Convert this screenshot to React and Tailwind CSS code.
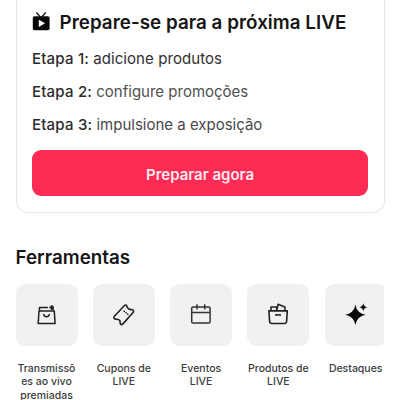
import React from 'react';

const steps = [
  { label: 'Etapa 1:', text: 'adicione produtos', color: 'text-[#303030]', tracking: 'tracking-[0.07px]' },
  { label: 'Etapa 2:', text: 'configure promoções', color: 'text-[#505050]', tracking: 'tracking-[0px]' },
  { label: 'Etapa 3:', text: 'impulsione a exposição', color: 'text-[#484848]', tracking: 'tracking-[0px]' },
];

const LiveIcon = () => (
  <svg className="w-[18px] h-[18px] overflow-visible" viewBox="0 0 18 18" fill="none">
    <path d="M4.4 -.4 8.4 4M13.8 -.4 9.8 4" stroke="#222" strokeWidth="1.5" />
    <rect x="0.8" y="3.2" width="16.8" height="14" rx="1.8" fill="#080808" />
    <path d="M6.8 6.7v7.2l6.2-3.6z" fill="#fff" />
  </svg>
);

const BagIcon = () => (
  <svg className="w-6 h-6" viewBox="0 0 24 24" fill="none" stroke="#222" strokeWidth="1.5" strokeLinejoin="round">
    <path d="M4 7.9h15.3l.8 12.6H3.2z" />
    <path d="M4.5 7.9V4.4h8.4M18.2 7.6V5.3" />
    <path d="M8.6 11c.4 3.6 5.4 3.6 5.8 0" />
    <path d="M16.8 2.2v4.6M14.4 4.5h4.6" strokeWidth="2.2" />
  </svg>
);

const CouponIcon = () => (
  <svg className="w-6 h-6" viewBox="0 0 24 24" fill="none" stroke="#222" strokeWidth="1.6" strokeLinejoin="round" strokeLinecap="round">
    <path d="M12.7 2.3c.8-.6 1.7-.3 2 .6.5 1.8 1.5 3.2 3.4 3.5 1.2.2 2.2-.2 3.1.8.6.7.6 1.4.1 2.1L10.9 20.9c-.8.9-1.7 1-2.4.2-.8-.9.1-2-.7-3.4-1-1.7-2.8-1.3-4.4-1.6-1.7-.3-2.1-1.6-1-2.8z" />
    <path d="M12.1 8.4h.2M14 9.8h.2M15.6 11.3h.2" />
  </svg>
);

const CalendarIcon = () => (
  <svg className="w-6 h-6" viewBox="0 0 24 24" fill="none" stroke="#333" strokeWidth="1.5">
    <rect x="2.7" y="4" width="18.4" height="16" rx="1.3" />
    <path d="M2.7 9.5h18.4M8 1.2v5.4M15.7 1.2v5.4" />
  </svg>
);

const ProductsIcon = () => (
  <svg className="w-6 h-6" viewBox="0 0 24 24" fill="none" stroke="#222" strokeWidth="1.6" strokeLinejoin="round">
    <path d="M2.9 7.9h18.4l-.7 10.3c-.1 1.6-.9 2.3-2.3 2.3H5.9c-1.4 0-2.2-.7-2.3-2.3z" />
    <path d="M5 7.7V4h5.7v3.7M10.8 7.3l1.3-6.1 6.8 2.7v3.8" />
    <path d="M9 11.9h6" />
  </svg>
);

const SparkleIcon = () => (
  <svg className="w-6 h-6" viewBox="0 0 24 24" fill="#080808">
    <path d="M11.4 1.8Q12.9 10.3 21.6 11.8Q12.9 13.3 11.4 22Q9.9 13.3 1.2 11.8Q9.9 10.3 11.4 1.8Z" />
    <path d="M19.3.3Q19.9 3.8 23.3 4.3Q19.9 4.8 19.3 8.3Q18.7 4.8 15.3 4.3Q18.7 3.8 19.3.3Z" />
  </svg>
);

const tools = [
  { lines: ['Transmissõ', 'es ao vivo', 'premiadas'], Icon: BagIcon },
  { lines: ['Cupons de', 'LIVE'], Icon: CouponIcon },
  { lines: ['Eventos', 'LIVE'], Icon: CalendarIcon },
  { lines: ['Produtos de', 'LIVE'], Icon: ProductsIcon },
  { lines: ['Destaques'], Icon: SparkleIcon },
];

const App = () => {
  return (
    <div className="w-[400px] h-[400px] overflow-hidden bg-white px-[15.5px] font-['Inter',sans-serif] text-[#161616]">
      <section className="h-[213px] w-[369px] rounded-b-xl border border-t-0 border-[#e6e6e6] pl-[15.5px] pr-4 pt-[11px]">
        <div className="flex h-[22px] items-center">
          <LiveIcon />
          <h1 className="ml-[9.5px] whitespace-nowrap pt-[2px] text-[18.8px] font-semibold leading-[22px] tracking-[0.04px]">
            Prepare-se para a próxima LIVE
          </h1>
        </div>
        <div className="mt-[10px]">
          {steps.map((step) => (
            <p key={step.label} className={`flex h-[33px] items-center whitespace-pre text-[15px] ${step.color} ${step.tracking}`}>
              <span className="font-medium tracking-[0.2px] text-[#2a2a2a]">{step.label} </span>
              <span>{step.text}</span>
            </p>
          ))}
        </div>
        <button className="mt-[8px] block h-[46px] w-[336px] rounded-[9px] bg-[#fe2c55] pt-[3px] text-[15px] font-semibold leading-5 text-[#ffe9ed]">
          Preparar agora
        </button>
      </section>
      <h2 className="mt-[33px] h-[22px] pt-px text-[18.8px] font-semibold leading-[22px]">Ferramentas</h2>
      <div className="mt-[16px] flex w-[368.5px] gap-[15.3px] overflow-hidden">
        {tools.map(({ lines, Icon }) => (
          <div key={lines[0]} className="w-[62px] shrink-0">
            <div className="flex h-[62px] items-center justify-center rounded-[9px] bg-[#f1f1f1]">
              <Icon />
            </div>
            <div className="mt-[15.5px] flex flex-col items-center text-[10.5px] font-medium leading-[13.5px] text-[#3c3c3c]">
              {lines.map((line) => (
                <span key={line} className="whitespace-nowrap">{line}</span>
              ))}
            </div>
          </div>
        ))}
      </div>
    </div>
  );
};

export default App;
